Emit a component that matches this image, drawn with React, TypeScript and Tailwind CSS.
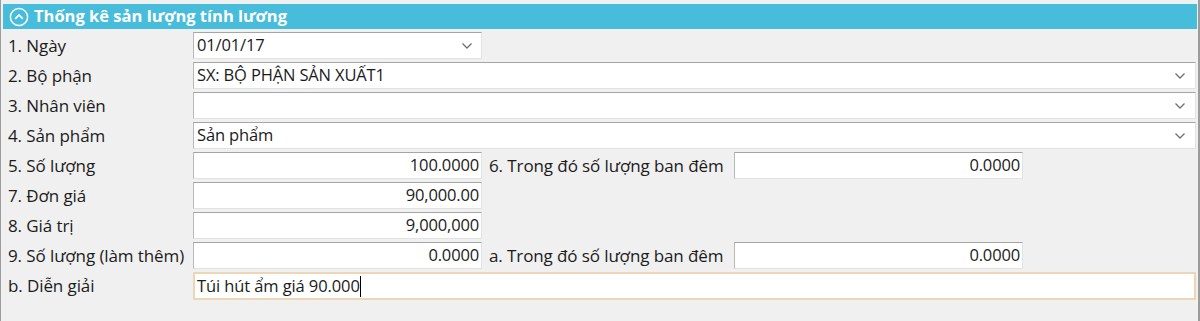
import React from 'react';

const FONT = "font-['Segoe_UI','Open_Sans','Noto_Sans',sans-serif]";

const inputBox =
  'h-[27px] bg-white border border-t-[#a5a5a5] border-l-[#b8b8b8] border-b-[#e2e2e2] border-r-[#e2e2e2] flex items-center text-[16.5px] text-[#1b1b1b] tracking-[-0.15px]';

const Chevron: React.FC = () => (
  <svg width="12" height="8" viewBox="0 0 12 8" className="shrink-0">
    <path d="M1.5 1.5 L6 6 L10.5 1.5" fill="none" stroke="#707070" strokeWidth="1.3" />
  </svg>
);

const Label: React.FC<{ text: string; className?: string }> = ({ text, className }) => (
  <div className={`shrink-0 pl-[7px] text-[17px] text-[#1b1b1b] whitespace-nowrap tracking-[-0.1px] ${className ?? 'w-[192px]'}`}>
    {text}
  </div>
);

const NumBox: React.FC<{ value: string }> = ({ value }) => (
  <div className={`${inputBox} w-[289px] justify-end pr-[2px]`}>{value}</div>
);

const SelectBox: React.FC<{ value: string; wide?: boolean }> = ({ value, wide }) => (
  <div className={`${inputBox} ${wide ? 'w-[1003px] pr-[9px]' : 'w-[289px] pr-[8px]'} justify-between pl-[3px]`}>
    <span>{value}</span>
    <Chevron />
  </div>
);

export default function App() {
  return (
    <div className={`w-[1200px] h-[321px] bg-[#f0f0f0] border-l border-r-2 border-[#9c9c9c] ${FONT}`}>
      {/* Header */}
      <div className="pt-[3px] pl-[2px] pr-px bg-[#f0f0f0]">
        <div className="h-[26px] bg-[#47bddb] flex items-center pl-[6px] gap-[5px] border-t border-[#e6f4f8]">
          <svg width="20" height="20" viewBox="0 0 20 20">
            <circle cx="10" cy="10" r="8.6" fill="none" stroke="white" strokeWidth="1.5" />
            <path d="M6.2 11.8 L10 8 L13.8 11.8" fill="none" stroke="white" strokeWidth="1.7" />
          </svg>
          <span className="text-white font-bold text-[16.5px]">Thống kê sản lượng tính lương</span>
        </div>
      </div>

      <div className="flex flex-col gap-[3px] pt-[3px]">
        <div className="flex items-center">
          <Label text="1. Ngày" />
          <SelectBox value="01/01/17" />
        </div>
        <div className="flex items-center">
          <Label text="2. Bộ phận" />
          <SelectBox value="SX: BỘ PHẬN SẢN XUẤT1" wide />
        </div>
        <div className="flex items-center">
          <Label text="3. Nhân viên" />
          <SelectBox value="" wide />
        </div>
        <div className="flex items-center">
          <Label text="4. Sản phẩm" />
          <SelectBox value="Sản phẩm" wide />
        </div>
        <div className="flex items-center">
          <Label text="5. Số lượng" />
          <NumBox value="100.0000" />
          <Label text="6. Trong đó số lượng ban đêm" className="w-[252px]" />
          <NumBox value="0.0000" />
        </div>
        <div className="flex items-center">
          <Label text="7. Đơn giá" />
          <NumBox value="90,000.00" />
        </div>
        <div className="flex items-center">
          <Label text="8. Giá trị" />
          <NumBox value="9,000,000" />
        </div>
        <div className="flex items-center">
          <Label text="9. Số lượng (làm thêm)" />
          <NumBox value="0.0000" />
          <Label text="a. Trong đó số lượng ban đêm" className="w-[252px]" />
          <NumBox value="0.0000" />
        </div>
        <div className="flex items-center">
          <Label text="b. Diễn giải" />
          <div className="h-[28px] w-[1003px] bg-white border-2 border-[#ecd6b6] flex items-center pl-[2px] text-[16.5px] text-[#1b1b1b] tracking-[-0.1px]">
            <span>Túi hút ẩm giá 90.000</span>
            <span className="w-px h-[21px] bg-black" />
          </div>
        </div>
      </div>
    </div>
  );
}
